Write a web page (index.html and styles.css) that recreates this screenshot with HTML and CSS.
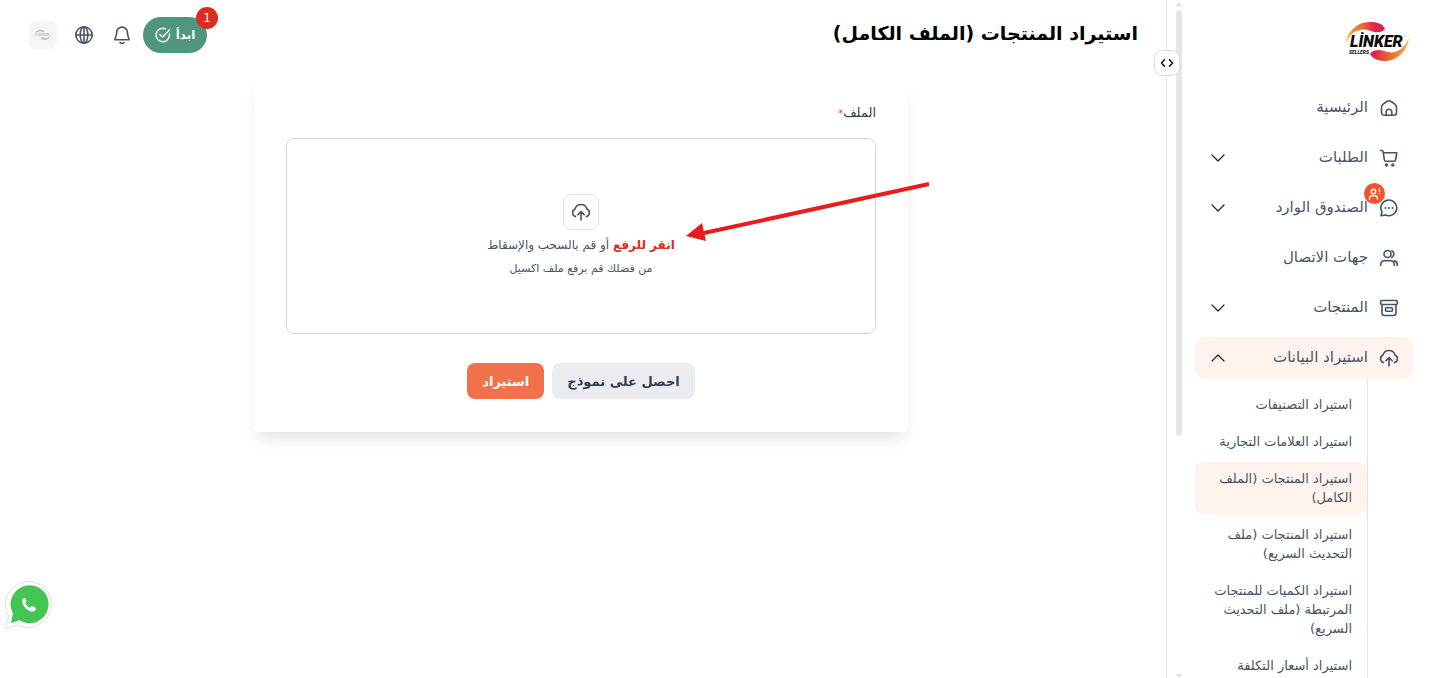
FILE: index.html
```
<!DOCTYPE html>
<html lang="ar" dir="rtl">

<head>
    <meta charset="UTF-8">
    <meta name="viewport" content="width=device-width, initial-scale=1.0">
    <title>استيراد المنتجات (الملف الكامل)</title>
    <link rel="stylesheet" href="styles.css">
</head>

<body>
    <aside class="sidebar">
        <button type="button" class="collapse-btn" aria-label="طي القائمة">
            <svg width="14" height="10" viewBox="0 0 14 10"><path d="M4.500 1.800 1.500 5l3 3.200M9.500 1.800l3 3.200-3 3.200" /></svg>
        </button>
        <div class="scrollbar" aria-hidden="true">
            <i class="arrow-up"></i>
            <i class="thumb"></i>
            <i class="arrow-down"></i>
        </div>

        <a href="#" class="logo" aria-label="Linker Sellers">
            <svg width="68" height="44" viewBox="0 0 68 44">
                <defs>
                    <linearGradient id="g1"><stop offset="0" stop-color="#fbb034" /><stop offset=".4" stop-color="#f36b2c" /><stop offset=".75" stop-color="#d9264f" /></linearGradient>
                    <linearGradient id="g2"><stop offset=".1" stop-color="#d9264f" /><stop offset=".55" stop-color="#f36b2c" /><stop offset="1" stop-color="#fbb034" /></linearGradient>
                </defs>
                <path fill="url(#g1)" d="M0 24C3 10 14 1 26 2c7 0 12 2 14 7-3 4-9 4-14 2C15 7 6 11 0 24z" />
                <path fill="url(#g2)" d="M64 18c-2 14-13 23-24 23-8 0-13-3-15-7 2-4 9-5 14-3 10 4 19 0 25-13z" />
                <text class="logo-name" x="5" y="27">LİNKER</text>
                <text class="logo-sub" x="4" y="34">SELLERS</text>
            </svg>
        </a>

        <nav class="menu">
            <a href="#" class="menu-item">
                <svg class="icon" viewBox="0 0 20 20"><path d="M2.500 9.300c0-1.500.6-2.400 1.700-3.200l3.600-2.600c1.400-1 3-1 4.400 0l3.600 2.600c1.100.8 1.700 1.700 1.700 3.200v5.200c0 1.700-1.100 2.800-2.800 2.800H5.300c-1.700 0-2.800-1.100-2.800-2.800z" /><path d="M7.200 17v-3a2.800 2.800 0 0 1 5.600 0v3" /></svg>
                <span>الرئيسية</span>
            </a>
            <a href="#" class="menu-item">
                <svg class="icon" viewBox="0 0 20 20"><path d="M1.500 2.500h1.300c.8 0 1.200.4 1.300 1.100l1.300 8.400c.1.800.6 1.200 1.400 1.200h8.300c.8 0 1.300-.4 1.400-1.200l1.300-7.300H4.400" /><circle cx="7.500" cy="17" r="1" /><circle cx="13.800" cy="17" r="1" /></svg>
                <span>الطلبات</span>
                <svg class="chevron" viewBox="0 0 14 8"><path d="m1 1 6 6 6-6" /></svg>
            </a>
            <a href="#" class="menu-item">
                <svg class="icon" viewBox="0 0 20 20"><path d="M2 17.800 3 14A8 7.800 0 1 1 6.500 17z" /><path class="dots" d="M6.500 10h.01M10 10h.01M13.500 10h.01" /></svg>
                <span>الصندوق الوارد</span>
                <i class="inbox-badge">
                    <svg width="14" height="14" viewBox="0 0 14 14"><circle cx="5.500" cy="4.500" r="2.200" /><path d="M1.500 12v-.5c0-2 1.200-2.800 2.500-2.800h3c1.300 0 2.500.8 2.500 2.800v.5M11.500 2v2.500M11.500 6.800v.1" /></svg>
                </i>
                <svg class="chevron" viewBox="0 0 14 8"><path d="m1 1 6 6 6-6" /></svg>
            </a>
            <a href="#" class="menu-item">
                <svg class="icon" viewBox="0 0 20 20"><circle cx="8.500" cy="6" r="3.500" /><path d="M12.800 2.800a3.500 3.500 0 0 1 0 6.400M1.700 17.500v-.8c0-2.400 1.600-4 4-4h5.600c2.400 0 4 1.600 4 4v.8M15.500 12.900c1.800.4 2.800 1.800 2.800 3.800v.8" /></svg>
                <span>جهات الاتصال</span>
            </a>
            <a href="#" class="menu-item">
                <svg class="icon" viewBox="0 0 20 20"><rect x="1.700" y="2.500" width="16.600" height="4" rx="1" /><path d="M3 6.500V15c0 1.500 1 2.500 2.500 2.500h9c1.500 0 2.500-1 2.500-2.500V6.500" /><rect x="6.500" y="9.800" width="7" height="3.400" rx="1" /></svg>
                <span>المنتجات</span>
                <svg class="chevron" viewBox="0 0 14 8"><path d="m1 1 6 6 6-6" /></svg>
            </a>
            <a href="#" class="menu-item active">
                <svg class="icon" viewBox="0 0 20 20"><path d="M4.500 14.600A4 4 0 0 1 4 7.100a6.200 6.200 0 0 1 12 0 4 4 0 0 1-.5 7.500M10 18v-8M6.800 12.800 10 9.600l3.200 3.200" /></svg>
                <span>استيراد البيانات</span>
                <svg class="chevron" viewBox="0 0 14 8"><path d="m1 7 6-6 6 6" /></svg>
            </a>
            <div class="submenu">
                <a href="#">استيراد التصنيفات</a>
                <a href="#">استيراد العلامات التجارية</a>
                <a href="#" class="active">استيراد المنتجات (الملف الكامل)</a>
                <a href="#">استيراد المنتجات (ملف التحديث السريع)</a>
                <a href="#">استيراد الكميات للمنتجات المرتبطة (ملف التحديث السريع)</a>
                <a href="#">استيراد أسعار التكلفة</a>
            </div>
        </nav>
    </aside>

    <main class="main">
        <header class="topbar">
            <h1>استيراد المنتجات (الملف الكامل)</h1>
            <div class="tools">
                <button type="button" class="start-btn">
                    ابدأ
                    <svg width="16" height="16" viewBox="0 0 16 16"><path d="M14.500 7v1a6.700 6.700 0 1 1-4-6.100M5 7.500l2.600 2.600L14.500 3" /></svg>
                    <span class="count">1</span>
                </button>
                <button type="button" class="icon-btn" aria-label="الإشعارات">
                    <svg class="icon" viewBox="0 0 20 20"><path d="M4.600 7.500a5.400 5.400 0 0 1 10.800 0c0 4.500 1.800 5.700 1.800 7.200H2.800c0-1.500 1.800-2.700 1.800-7.200zM8 17.700c1.200.9 2.800.9 4 0" /></svg>
                </button>
                <button type="button" class="icon-btn" aria-label="اللغة">
                    <svg class="icon" viewBox="0 0 20 20"><circle cx="10" cy="10" r="8.200" /><ellipse cx="10" cy="10" rx="3.800" ry="8.200" /><path d="M2 10h16M10 2v16" /></svg>
                </button>
                <button type="button" class="avatar" aria-label="الحساب">
                    <svg width="18" height="14" viewBox="0 0 68 44">
                        <path d="M0 24C3 10 14 1 26 2c7 0 12 2 14 7-3 4-9 4-14 2C15 7 6 11 0 24zM64 18c-2 14-13 23-24 23-8 0-13-3-15-7 2-4 9-5 14-3 10 4 19 0 25-13z" />
                        <text class="logo-name" x="5" y="27">LİNKER</text>
                    </svg>
                </button>
            </div>
        </header>

        <form class="card">
            <label class="field-label" for="file">الملف<span class="required">*</span></label>
            <label class="dropzone">
                <input type="file" id="file">
                <span class="upload-icon">
                    <svg class="icon" viewBox="0 0 20 20"><path d="M4.500 14.600A4 4 0 0 1 4 7.100a6.200 6.200 0 0 1 12 0 4 4 0 0 1-.5 7.500M10 18v-8M6.800 12.800 10 9.600l3.200 3.200" /></svg>
                </span>
                <span class="upload-text"><b>انقر للرفع</b> أو قم بالسحب والإسقاط</span>
                <span class="upload-hint">من فضلك قم برفع ملف اكسيل</span>
            </label>
            <div class="actions">
                <button type="button" class="btn btn-light">احصل على نموذج</button>
                <button type="submit" class="btn btn-primary">استيراد</button>
            </div>
            <svg class="pointer" width="246" height="62" viewBox="0 0 246 62" aria-hidden="true">
                <path d="M243 2 18 51" stroke="#e81c1c" stroke-width="4" />
                <path d="M0 54 16 41l4 18z" fill="#e81c1c" />
            </svg>
        </form>
    </main>

    <a href="#" class="whatsapp" aria-label="WhatsApp">
        <svg width="50" height="50" viewBox="0 0 50 50">
            <path fill="#fff" stroke="#d5e3e0" d="M1.500 48.500 4.500 36A23 23 0 1 1 14 45z" />
            <path fill="#43c553" d="M7 43l2-9.500a19 19 0 1 1 6.500 6.800z" />
            <path fill="#fff" d="M20.500 18c-2 .5-2.800 2.300-2.200 4.500 1 4.200 5 8 9.200 8.900 2.400.5 4.300-.6 4.500-2.900 0-.5-.2-.8-.6-1l-3-1.400c-.5-.2-.8-.1-1.100.3l-1.200 1.300c-2.200-.8-4-2.600-4.900-4.700l1.100-1.200c.3-.4.3-.7.2-1.100l-1.200-2.300c-.2-.3-.4-.5-.8-.4z" />
        </svg>
    </a>
</body>

</html>
```
FILE: styles.css
```
* {
    box-sizing: border-box;
}

body {
    margin: 0;
    display: flex;
    height: 100vh;
    overflow: hidden;
    background-color: #fff;
    color: #475467;
    font-family: "DejaVu Sans", sans-serif;
}

a {
    color: inherit;
    text-decoration: none;
}

button {
    font-family: inherit;
    border: none;
    cursor: pointer;
}

svg {
    display: block;
    flex-shrink: 0;
    fill: none;
    stroke-linecap: round;
    stroke-linejoin: round;
}

.icon {
    width: 20px;
    height: 20px;
    stroke: #475467;
    stroke-width: 1.6;
}

/* sidebar */
.sidebar {
    position: relative;
    flex: 0 0 265px;
    padding: 20px 18px 0 28px;
    border-left: 1px solid #e4e4ec;
}

.collapse-btn {
    position: absolute;
    z-index: 1;
    top: 50px;
    left: -13px;
    display: flex;
    align-items: center;
    justify-content: center;
    width: 26px;
    height: 26px;
    padding: 0;
    background-color: #fff;
    border: 1px solid #dcdcdc;
    border-radius: 8px;
}

.collapse-btn svg {
    stroke: #111;
    stroke-width: 1.6;
}

.scrollbar {
    position: absolute;
    top: 0;
    bottom: 0;
    left: 9px;
    display: flex;
    flex-direction: column;
    align-items: center;
    width: 6px;
    padding: 2px 0 0;
}

.arrow-up,
.arrow-down {
    border: 3px solid transparent;
}

.arrow-up {
    border-top: 0;
    border-bottom: 4px solid #dedede;
}

.arrow-down {
    margin-top: auto;
    border-bottom: 0;
    border-top: 4px solid #dedede;
}

.thumb {
    width: 6px;
    height: 63%;
    margin-top: 4px;
    background-color: #e6e6e6;
    border-radius: 3px;
}

.logo {
    display: block;
    width: 68px;
    height: 67px;
}

.logo svg,
.avatar svg {
    direction: ltr;
}

.logo-name {
    fill: #0b0b0b;
    font: italic 900 16px "Roboto", sans-serif;
}

.logo-sub {
    fill: #222;
    font: italic 900 5px/1 "Roboto", sans-serif;
}

.menu {
    display: flex;
    flex-direction: column;
    gap: 8px;
}

.menu-item {
    position: relative;
    display: flex;
    align-items: center;
    gap: 11px;
    height: 42px;
    padding: 0 14px 0 16px;
    border-radius: 10px;
    font-size: 15px;
    white-space: nowrap;
}

.menu-item span {
    padding-bottom: 3px;
}

.menu-item.active,
.submenu .active {
    background-color: #fff4ed;
}

.menu-item .chevron {
    width: 14px;
    height: 8px;
    margin-right: auto;
    stroke: #222;
    stroke-width: 1.2;
}

.dots {
    stroke-width: 2;
}

.inbox-badge {
    position: absolute;
    top: -4px;
    right: 28px;
    display: flex;
    align-items: center;
    justify-content: center;
    width: 21px;
    height: 21px;
    background-color: #f0542d;
    border-radius: 50%;
}

.inbox-badge svg {
    stroke: #fff;
    stroke-width: 1.4;
}

.submenu {
    display: flex;
    flex-direction: column;
    gap: 4px;
    margin: -8px 45px 0 0;
    padding-top: 9px;
    border-right: 1px solid #e4e4e7;
}

.submenu a {
    padding: 7px 15px 7px 14px;
    border-radius: 8px;
    font-size: 13px;
    line-height: 19px;
}

/* main area */
.main {
    flex: 1;
    min-width: 0;
    padding-right: 4px;
}

.topbar {
    display: flex;
    align-items: center;
    justify-content: space-between;
    height: 70px;
    padding: 0 24px 0 29px;
}

.topbar h1 {
    margin: 0;
    padding-bottom: 4px;
    color: #000;
    font-size: 19px;
    font-weight: bold;
}

.tools {
    display: flex;
    align-items: center;
    gap: 10px;
}

.start-btn {
    position: relative;
    display: flex;
    align-items: center;
    justify-content: center;
    gap: 5px;
    width: 64px;
    height: 36px;
    margin-left: -3px;
    padding: 0;
    background-color: #50967d;
    border-radius: 18px;
    color: #fff;
    font-size: 12px;
    font-weight: bold;
}

.start-btn svg {
    stroke: #fff;
    stroke-width: 1.4;
}

.count {
    position: absolute;
    top: -10px;
    right: -11px;
    width: 22px;
    height: 22px;
    background-color: #d92d20;
    border-radius: 50%;
    font-weight: normal;
    line-height: 22px;
}

.icon-btn {
    padding: 4px;
    background: none;
}

.avatar {
    display: flex;
    align-items: center;
    justify-content: center;
    width: 28px;
    height: 28px;
    margin-right: 3px;
    padding: 0;
    background-color: #f5f5f5;
    border-radius: 6px;
}

.avatar path,
.avatar text {
    fill: #c6c6c6;
}

.card {
    position: relative;
    max-width: 654px;
    margin: 10px auto 0;
    padding: 23px 32px 33px;
    background-color: #fff;
    border-radius: 4px;
    box-shadow: 0 10px 15px -3px rgba(0, 0, 0, 0.1);
}

.field-label {
    display: block;
    margin-bottom: 14px;
    color: #344054;
    font-size: 13px;
    line-height: 20px;
}

.required {
    color: #f04438;
    font-size: 10px;
}

.dropzone {
    display: flex;
    flex-direction: column;
    align-items: center;
    padding: 55px 24px 54px;
    border: 1px solid #d5d7da;
    border-radius: 8px;
    cursor: pointer;
}

.dropzone input {
    position: absolute;
    width: 1px;
    height: 1px;
    opacity: 0;
}

.upload-icon {
    padding: 7px;
    border: 1px solid #dcdfe6;
    border-radius: 8px;
}

.upload-text {
    margin-top: 4px;
    font-size: 12px;
    line-height: 22px;
}

.upload-text b {
    color: #d92d20;
}

.upload-hint {
    margin-top: 3px;
    font-size: 11px;
    line-height: 20px;
}

.actions {
    display: flex;
    justify-content: center;
    gap: 8px;
    margin-top: 29px;
}

.btn {
    height: 36px;
    padding: 0 15px;
    border-radius: 8px;
    font-size: 13px;
    font-weight: bold;
}

.btn-light {
    background-color: #eaecf0;
    color: #344054;
}

.btn-primary {
    background-color: #f1714a;
    color: #fff;
}

.pointer {
    position: absolute;
    top: 102px;
    left: 432px;
    stroke-linecap: butt;
}

.whatsapp {
    position: fixed;
    bottom: 48px;
    left: 4px;
}
```
